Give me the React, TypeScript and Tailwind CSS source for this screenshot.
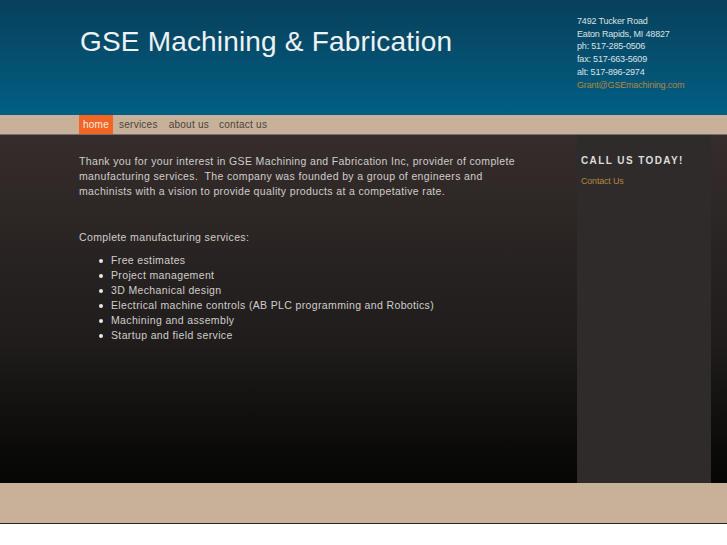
export default function App() {
  const items = [
    "Free estimates",
    "Project management",
    "3D Mechanical design",
    "Electrical machine controls (AB PLC programming and Robotics)",
    "Machining and assembly",
    "Startup and field service",
  ];
  return (
    <div className="bg-white h-[545px] overflow-hidden font-['Liberation_Sans',Arial,sans-serif]">
      <header className="h-[115px] bg-gradient-to-b from-[#07405a] to-[#005f85] flex justify-between pl-[80px]">
        <h1 className="mt-[25px] text-[28px] leading-[34px] font-normal text-[#eef2f4] tracking-[0.18px]">
          GSE Machining &amp; Fabrication
        </h1>
        <address className="w-[150px] pt-[15px] not-italic text-[9px] leading-[12.7px] text-[#dbe2e6] tracking-[-0.18px]">
          <div>7492 Tucker Road</div>
          <div>Eaton Rapids, MI 48827</div>
          <div>ph: 517-285-0506</div>
          <div>fax: 517-663-5609</div>
          <div>alt: 517-896-2974</div>
          <div className="text-[#b3873f]">Grant@GSEmachining.com</div>
        </address>
      </header>
      <nav className="h-[20px] bg-[#c7b299] border-b border-[#77706a] flex pl-[79px] text-[10px] leading-[19px] tracking-[0.25px] text-[#4a423a]">
        <a className="bg-[#f26522] text-[#fbeee4] w-[34px] text-center">home</a>
        <a className="ml-[6px]">services</a>
        <a className="ml-[11px]">about us</a>
        <a className="ml-[10px]">contact us</a>
      </nav>
      <div className="h-[348px] bg-gradient-to-b from-[#352d2b] via-[#1f1c1b] via-60% to-[#060605] flex pl-[79px] text-[10.5px] leading-[15px] tracking-[0.36px] text-[#d0cecc]">
        <main className="w-[498px] pt-[19px]">
          <p className="w-[450px]">
            Thank you for your interest in GSE Machining and Fabrication Inc, provider of complete manufacturing services.&nbsp; The company was founded by a group of engineers and machinists with a vision to provide quality products at a competative rate.
          </p>
          <p className="mt-[31px]">Complete manufacturing services:</p>
          <ul className="mt-[8px] pl-[20px]">
            {items.map((t) => (
              <li key={t} className="flex items-center gap-[8px]">
                <span className="w-[4px] h-[4px] rounded-full bg-[#e8e8e8]" />
                {t}
              </li>
            ))}
          </ul>
        </main>
        <aside className="w-[134px] bg-[#2e2b2a] pt-[19px] pl-[4px]">
          <h2 className="text-[10px] leading-[13px] font-bold tracking-[1.4px] text-[#dedcda]">CALL US TODAY!</h2>
          <a className="block mt-[8px] text-[9px] leading-[12px] tracking-[-0.2px] text-[#b3873f]">Contact Us</a>
        </aside>
      </div>
      <footer className="h-[41px] bg-[#c7b299] border-b border-[#2b2422]" />
    </div>
  );
}
